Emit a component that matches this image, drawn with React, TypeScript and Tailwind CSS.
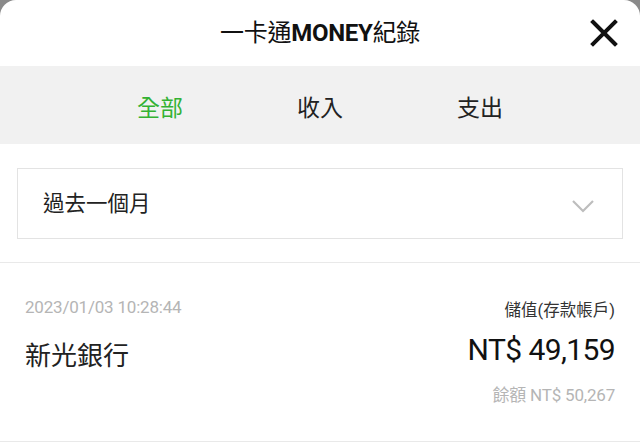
import { useState } from 'react'

const tabs = ['全部', '收入', '支出']

const font = { fontFamily: 'Roboto, "Noto Sans CJK TC", sans-serif' }

export default function App() {
  const [active, setActive] = useState(0)

  return (
    <div className="w-[640px] h-[447px] overflow-hidden bg-[#8a8a8a]" style={font}>
      <div className="h-full bg-white rounded-t-[16px] overflow-hidden">
        {/* Header */}
        <div className="relative h-[66px] flex items-center justify-center">
          <h1 className="text-[24px] text-[#111] tracking-[-0.3px]">
            一卡通<span className="font-bold">MONEY</span>紀錄
          </h1>
          <button className="absolute right-[22px] top-[19px] w-[28px] h-[28px] flex items-center justify-center">
            <svg width="28" height="28" viewBox="0 0 28 28">
              <path d="M3 3 L25 25 M25 3 L3 25" stroke="#111" strokeWidth="4" strokeLinecap="square" />
            </svg>
          </button>
        </div>

        {/* Tabs */}
        <div className="h-[78px] bg-[#f1f1f1] grid grid-cols-3 px-[80px]">
          {tabs.map((t, i) => (
            <button
              key={t}
              onClick={() => setActive(i)}
              className={`text-[23px] flex items-center justify-center pt-[8px] ${
                active === i ? 'text-[#33b233]' : 'text-[#222]'
              }`}
            >
              {t}
            </button>
          ))}
        </div>

        {/* Period select */}
        <div className="px-[17px] pt-[24px] pb-[23px] border-b border-[#e9e9e9]">
          <div className="h-[71px] border border-[#e3e3e3] flex items-center justify-between pl-[25px] pr-[27px]">
            <span className="text-[21.5px] text-[#222] pt-[2px]">過去一個月</span>
            <svg width="24" height="14" viewBox="0 0 24 14" className="mt-[4px]">
              <path d="M2 2 L12 12 L22 2" fill="none" stroke="#bdbdbd" strokeWidth="2.2" />
            </svg>
          </div>
        </div>

        {/* Record */}
        <div className="px-[25px] pt-[34px] pb-[36px] border-b border-[#e9e9e9] flex justify-between">
          <div className="flex flex-col">
            <span className="text-[17px] leading-[20px] text-[#b5b5b5] tracking-[-0.2px]">2023/01/03 10:28:44</span>
            <span className="text-[26px] leading-[32px] text-[#222] mt-[23px]">新光銀行</span>
          </div>
          <div className="flex flex-col items-end">
            <span className="text-[16.5px] leading-[20px] text-[#333] mt-[4px]">儲值(存款帳戶)</span>
            <span className="text-[30px] leading-[36px] text-[#111] mt-[11px] tracking-[-0.6px]">NT$ 49,159</span>
            <span className="text-[17px] leading-[20px] text-[#b5b5b5] mt-[17px] tracking-[-0.2px]">餘額 NT$ 50,267</span>
          </div>
        </div>
      </div>
    </div>
  )
}
